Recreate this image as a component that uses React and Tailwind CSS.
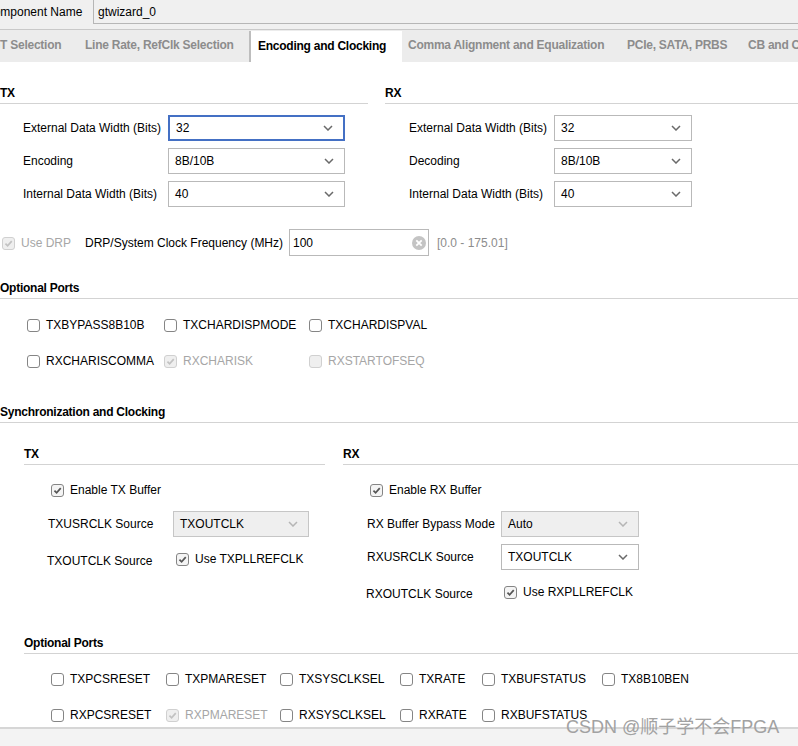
import React from "react";

function Box({ checked, disabled }) {
  return (
    <span
      className={
        disabled
          ? "inline-flex h-[13px] w-[13px] shrink-0 items-center justify-center rounded-[3px] border border-[#d0d0d0] bg-[#efefef]"
          : checked
          ? "inline-flex h-[13px] w-[13px] shrink-0 items-center justify-center rounded-[3px] border border-[#858585] bg-[#f4f4f4]"
          : "inline-flex h-[13px] w-[13px] shrink-0 items-center justify-center rounded-[3px] border border-[#858585] bg-white"
      }
    >
      {checked && (
        <svg viewBox="0 0 10 10" className="h-[9px] w-[9px]">
          <path
            d="M1.6 5.2 L4 7.6 L8.6 2.4"
            fill="none"
            stroke={disabled ? "#c2c2c2" : "#555555"}
            strokeWidth="1.9"
          />
        </svg>
      )}
    </span>
  );
}

function Check({ label, checked, disabled }) {
  return (
    <div className="flex h-[20px] items-center gap-[6px]">
      <Box checked={checked} disabled={disabled} />
      <span className={disabled ? "text-[#a6a6a6]" : "text-black"}>{label}</span>
    </div>
  );
}

function Chevron({ light }) {
  return (
    <svg viewBox="0 0 10 6" className="h-[6px] w-[10px]">
      <path
        d="M1 1 L5 5 L9 1"
        fill="none"
        stroke={light ? "#b5b5b5" : "#6a6a6a"}
        strokeWidth="1.5"
      />
    </svg>
  );
}

function Select({ value, w, focused, disabled }) {
  const base =
    "flex h-[26px] items-center justify-between pr-[10px] " + w + " ";
  const style = focused
    ? "border-2 border-[#4470c4] bg-white pl-[6px]"
    : disabled
    ? "border border-[#c6c6c6] bg-[#efefef] pl-[6px]"
    : "border border-[#b9b9b9] bg-white pl-[6px]";
  return (
    <div className={base + style}>
      <span>{value}</span>
      <Chevron light={disabled} />
    </div>
  );
}

function Header({ children, className }) {
  return (
    <div
      className={
        "border-b border-[#d3d3d3] pb-[2px] font-bold leading-[15px] tracking-[-0.25px] " +
        (className || "")
      }
    >
      {children}
    </div>
  );
}

function Sep() {
  return <div className="mt-[2px] h-[25px] w-[1px] bg-[#c2c2c2]" />;
}

export default function App() {
  return (
    <div
      className="relative h-[746px] w-[798px] overflow-hidden bg-white text-[12px] leading-[14px] text-black"
      style={{ fontFamily: '"Liberation Sans", Arial, "Noto Sans CJK SC", sans-serif' }}
    >
      {/* Component name */}
      <div className="flex h-[30px] items-start border-b border-[#c9c9c9] bg-[#f0f0f0]">
        <div className="ml-[-15px] flex h-[23px] w-[108px] shrink-0 items-center whitespace-nowrap">
          Component Name
        </div>
        <div className="flex h-[24px] flex-1 items-center border-b border-l border-[#b6b6b6] pl-[4px]">
          gtwizard_0
        </div>
      </div>

      {/* Tabs */}
      <div className="flex h-[32px] items-start overflow-hidden whitespace-nowrap bg-[#ececec] font-bold tracking-[-0.25px] text-[#8c8c8c]">
        <div className="flex h-[30px] w-[78px] shrink-0 items-center overflow-hidden">
          <span className="ml-[-9px]">GT Selection</span>
        </div>
        <Sep />
        <div className="flex h-[30px] w-[171px] shrink-0 items-center pl-[7px]">
          Line Rate, RefClk Selection
        </div>
        <div className="mt-[1px] flex h-[31px] w-[153px] shrink-0 items-center border-l-2 border-[#bdbdbd] bg-white pb-[1px] pl-[7px] text-black">
          Encoding and Clocking
        </div>
        <div className="flex h-[30px] w-[218px] shrink-0 items-center pl-[6px]">
          Comma Alignment and Equalization
        </div>
        <div className="mt-[2px] h-[25px] w-[2px] bg-[#c2c2c2]" />
        <div className="flex h-[30px] w-[122px] shrink-0 items-center pl-[7px]">
          PCIe, SATA, PRBS
        </div>
        <div className="mt-[2px] h-[25px] w-[2px] bg-[#c2c2c2]" />
        <div className="flex h-[30px] shrink-0 items-center pl-[6px]">
          CB and CC Sequence
        </div>
      </div>

      {/* Content */}
      <div className="h-[665px] overflow-hidden">
        {/* TX / RX */}
        <div className="mt-[24px] flex gap-[17px]">
          <div className="w-[368px] shrink-0">
            <Header>TX</Header>
            <div className="mt-[11px] flex flex-col gap-[7px] pl-[23px]">
              <div className="flex items-center">
                <span className="w-[145px] shrink-0">External Data Width (Bits)</span>
                <Select value="32" w="w-[177px]" focused />
              </div>
              <div className="flex items-center">
                <span className="w-[145px] shrink-0">Encoding</span>
                <Select value="8B/10B" w="w-[177px]" />
              </div>
              <div className="flex items-center">
                <span className="w-[145px] shrink-0">Internal Data Width (Bits)</span>
                <Select value="40" w="w-[177px]" />
              </div>
            </div>
          </div>
          <div className="flex-1">
            <Header>RX</Header>
            <div className="mt-[11px] flex flex-col gap-[7px] pl-[24px]">
              <div className="flex items-center">
                <span className="w-[145px] shrink-0">External Data Width (Bits)</span>
                <Select value="32" w="w-[138px]" />
              </div>
              <div className="flex items-center">
                <span className="w-[145px] shrink-0">Decoding</span>
                <Select value="8B/10B" w="w-[138px]" />
              </div>
              <div className="flex items-center">
                <span className="w-[145px] shrink-0">Internal Data Width (Bits)</span>
                <Select value="40" w="w-[138px]" />
              </div>
            </div>
          </div>
        </div>

        {/* DRP row */}
        <div className="mt-[22px] flex h-[27px] items-center pl-[2px]">
          <div className="w-[83px] shrink-0 pt-[1px]">
            <Check label="Use DRP" checked disabled />
          </div>
          <span className="mt-[1px] w-[204px] shrink-0">DRP/System Clock Frequency (MHz)</span>
          <div className="flex h-[27px] w-[140px] items-center justify-between border border-[#b9b9b9] pl-[3px] pr-[2px]">
            <span className="mt-[1px]">100</span>
            <svg viewBox="0 0 14 14" className="h-[14px] w-[14px]">
              <circle cx="7" cy="7" r="7" fill="#c4c4c4" />
              <path d="M4.3 4.3 L9.7 9.7 M9.7 4.3 L4.3 9.7" stroke="#ffffff" strokeWidth="1.8" />
            </svg>
          </div>
          <span className="ml-[8px] mt-[1px] text-[#8c8c8c]">[0.0 - 175.01]</span>
        </div>

        {/* Optional Ports */}
        <Header className="mt-[25px]">Optional Ports</Header>
        <div className="mt-[16px] grid grid-cols-[137px_145px_auto] gap-y-[16px] pl-[27px]">
          <Check label="TXBYPASS8B10B" />
          <Check label="TXCHARDISPMODE" />
          <Check label="TXCHARDISPVAL" />
          <Check label="RXCHARISCOMMA" />
          <Check label="RXCHARISK" checked disabled />
          <Check label="RXSTARTOFSEQ" disabled />
        </div>

        {/* Synchronization and Clocking */}
        <Header className="mt-[34px]">Synchronization and Clocking</Header>
        <div className="pl-[24px]">
          <div className="mt-[24px] flex gap-[18px]">
            <div className="w-[301px] shrink-0">
              <Header>TX</Header>
              <div className="mt-[15px] pl-[27px]">
                <Check label="Enable TX Buffer" checked />
              </div>
              <div className="mt-[11px] flex items-center pl-[24px]">
                <span className="w-[125px] shrink-0">TXUSRCLK Source</span>
                <Select value="TXOUTCLK" w="w-[136px]" disabled />
              </div>
              <div className="mt-[11px] flex h-[22px] items-center pl-[23px]">
                <span className="mt-[3px] w-[129px] shrink-0">TXOUTCLK Source</span>
                <Check label="Use TXPLLREFCLK" checked />
              </div>
            </div>
            <div className="flex-1">
              <Header>RX</Header>
              <div className="mt-[15px] pl-[27px]">
                <Check label="Enable RX Buffer" checked />
              </div>
              <div className="mt-[11px] flex items-center pl-[24px]">
                <span className="w-[134px] shrink-0">RX Buffer Bypass Mode</span>
                <Select value="Auto" w="w-[138px]" disabled />
              </div>
              <div className="mt-[7px] flex items-center pl-[24px]">
                <span className="w-[134px] shrink-0">RXUSRCLK Source</span>
                <Select value="TXOUTCLK" w="w-[138px]" />
              </div>
              <div className="mt-[11px] flex h-[22px] items-center pl-[23px]">
                <span className="mt-[3px] w-[138px] shrink-0">RXOUTCLK Source</span>
                <Check label="Use RXPLLREFCLK" checked />
              </div>
            </div>
          </div>

          <Header className="mt-[33px]">Optional Ports</Header>
          <div className="mt-[15px] grid grid-cols-[115px_114px_120px_82px_120px_auto] gap-y-[16px] pl-[27px]">
            <Check label="TXPCSRESET" />
            <Check label="TXPMARESET" />
            <Check label="TXSYSCLKSEL" />
            <Check label="TXRATE" />
            <Check label="TXBUFSTATUS" />
            <Check label="TX8B10BEN" />
            <Check label="RXPCSRESET" />
            <Check label="RXPMARESET" checked disabled />
            <Check label="RXSYSCLKSEL" />
            <Check label="RXRATE" />
            <Check label="RXBUFSTATUS" />
          </div>
        </div>
      </div>

      {/* Footer */}
      <div className="h-[19px] border-t-2 border-[#d6d6d6] bg-[#f3f3f3]" />

      {/* Watermark */}
      <div
        className="absolute left-[566px] top-[715px] whitespace-nowrap text-[18px] leading-[24px] text-[#a2a2a2]"
        style={{ fontFamily: '"Liberation Sans", "Noto Sans CJK SC", sans-serif' }}
      >
        CSDN @顺子学不会FPGA
      </div>
    </div>
  );
}
